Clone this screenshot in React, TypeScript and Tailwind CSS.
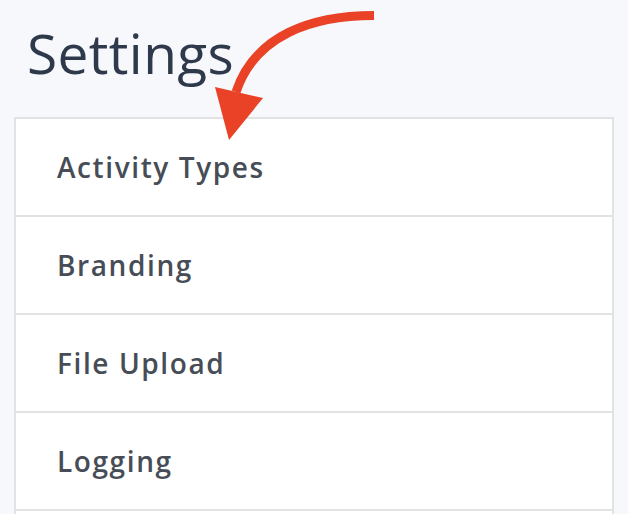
const items = ["Activity Types", "Branding", "File Upload", "Logging"];

export default function App() {
  return (
    <div
      className="relative h-[514px] w-[628px] overflow-hidden bg-[#f7f8fc]"
      style={{ fontFamily: "'Open Sans', Lato, sans-serif" }}
    >
      <h1 className="pl-[27px] pt-[23px] text-[55px] leading-[59px] font-normal tracking-[0.4px] text-[#2e3a4b]">Settings</h1>

      <div className="ml-[14px] mt-[35px] w-[600px] border-2 border-[#e2e2e4] bg-white">
        {items.map((label) => (
          <div
            key={label}
            className="flex h-[98px] items-center border-b-2 border-[#e2e2e4] pl-[41px] text-[28px] font-semibold tracking-[1.6px] text-[#474d56]"
          >
            {label}
          </div>
        ))}
        <div className="h-[98px]" />
      </div>

      {/* annotation arrow */}
      <svg className="pointer-events-none absolute left-0 top-0" width="628" height="514" viewBox="0 0 628 514">
        <path d="M374 15.5 C 312 15.5, 255 35, 236 92" fill="none" stroke="#e94227" strokeWidth="9" />
        <polygon points="215,87 263,98 229,140" fill="#e94227" />
      </svg>
    </div>
  );
}
